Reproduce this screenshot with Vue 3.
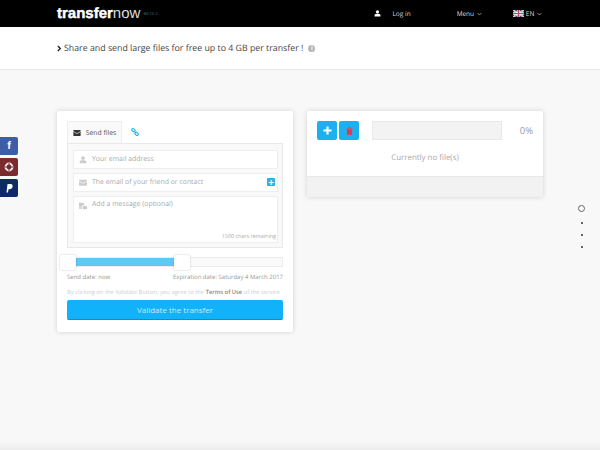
<script setup>
const dots = [0, 1, 2]
</script>

<template>
  <div class="page">
    <header class="topbar">
      <div class="brand"><b>transfer</b><span>now</span><i>BETA 2</i></div>
      <nav class="nav">
        <svg class="user" viewBox="0 0 12 12"><circle cx="6" cy="3.2" r="2.7" fill="#fff" /><path d="M1 11V8.6C1 7.4 2.4 6.6 4 6.4h4c1.6.2 3 1 3 2.2V11z" fill="#fff" /></svg>
        <span class="login">Log in</span>
        <span class="menu">Menu <svg class="chev" viewBox="0 0 8 5"><path d="M1 1l3 3 3-3" /></svg></span>
        <svg class="flag" viewBox="0 0 12 8">
          <rect width="12" height="8" fill="#3f4f8f" />
          <path d="M0 0l12 8M12 0L0 8" stroke="#fff" stroke-width="1.6" />
          <path d="M0 0l12 8M12 0L0 8" stroke="#c8506f" stroke-width=".6" />
          <path d="M6 0v8M0 4h12" stroke="#fff" stroke-width="2.6" />
          <path d="M6 0v8M0 4h12" stroke="#c8405f" stroke-width="1.4" />
        </svg>
        <span class="lang">EN <svg class="chev" viewBox="0 0 8 5"><path d="M1 1l3 3 3-3" /></svg></span>
      </nav>
    </header>

    <section class="tagline">
      <svg class="arrow" viewBox="0 0 6 8"><path d="M1 1l3 3-3 3" /></svg>
      <span>Share and send large files for free up to 4 GB per transfer !</span>
      <span class="info">i</span>
    </section>

    <main class="content">
      <div class="card send">
        <div class="tabs">
          <div class="tab active">
            <svg class="tab-mail" viewBox="0 0 12 10"><rect width="12" height="10" rx="1" fill="#333" /><path d="M0 2.5l6 3.5 6-3.5" fill="none" stroke="#fff" stroke-width="1" /></svg>
            Send files
          </div>
          <div class="tab link">
            <svg viewBox="0 0 10 10"><g fill="none" stroke="#1fb1e6" stroke-width="1.4"><rect x="0.8" y="1.2" width="4.4" height="3" rx="1.4" transform="rotate(40 3 2.7)" /><rect x="4.8" y="5.8" width="4.4" height="3" rx="1.4" transform="rotate(40 7 7.3)" /></g></svg>
          </div>
        </div>
        <div class="fields">
          <div class="field">
            <svg class="ficon" viewBox="0 0 12 12"><circle cx="6" cy="3.2" r="2.7" /><path d="M1 11V8.6C1 7.4 2.4 6.6 4 6.4h4c1.6.2 3 1 3 2.2V11z" /></svg>
            <span>Your email address</span>
          </div>
          <div class="field">
            <svg class="ficon" viewBox="0 0 12 10"><rect width="12" height="9" rx="1" /><path d="M0 2.5l6 3 6-3" fill="none" stroke="#fff" /></svg>
            <span>The email of your friend or contact</span>
            <span class="plus">+</span>
          </div>
          <div class="field message">
            <svg class="ficon" viewBox="0 0 12 12"><path d="M0 1h6l2 2v2H5v2H0zM0 8h5v2H0zM6 6h6v5H6z" /></svg>
            <span>Add a message (optional)</span>
            <small>1500 chars remaining</small>
          </div>
        </div>
        <div class="slider">
          <div class="handle"></div>
          <div class="fill"></div>
          <div class="handle second"></div>
        </div>
        <div class="dates">
          <span>Send date: now</span>
          <span>Expiration date: Saturday 4 March 2017</span>
        </div>
        <p class="terms">By clicking on the Validate Button, you agree to the <b>Terms of Use</b> of the service</p>
        <button class="validate">Validate the transfer</button>
      </div>

      <div class="card files">
        <div class="files-body">
          <div class="toolbar">
            <button class="tool">
              <svg class="add" viewBox="0 0 10 10"><path d="M5 .5v9M.5 5h9" stroke="#fff" stroke-width="2.4" /></svg>
            </button>
            <button class="tool">
              <svg class="trash" viewBox="0 0 8 9"><path d="M1 2.4h6V9H1zM.4 1h7.2v1H.4zM2.8 0h2.4v1H2.8z" fill="#e0445c" /><path d="M2.6 3.4v4.4M5.4 3.4v4.4" stroke="#a32f48" stroke-width=".6" /></svg>
            </button>
            <div class="progress"></div>
            <span class="percent">0%</span>
          </div>
          <p class="empty">Currently no file(s)</p>
        </div>
        <div class="files-foot"></div>
      </div>
    </main>

    <div class="social">
      <a class="fb">f</a>
      <a class="lifebuoy"><svg viewBox="0 0 10 10"><circle cx="5" cy="5" r="3.4" fill="none" stroke="#eee" stroke-width="2" /><path d="M5 1v8M1 5h8" stroke="#7b2a2e" stroke-width="1" /></svg></a>
      <a class="paypal"><svg viewBox="0 0 10 10"><path d="M2.5 9.5L3.5 1h3C8.5 1 9 2.5 8.5 4S6.8 6.2 5.5 6.2h-1L4 9.5z" fill="#fff" /></svg></a>
    </div>

    <div class="pager">
      <span class="ring"></span>
      <span v-for="d in dots" :key="d" class="dot"></span>
    </div>
  </div>
</template>

<style>
html, body {
  margin: 0;
  height: 100%;
  overflow: hidden;
}
</style>

<style scoped>
.page {
  position: relative;
  width: 600px;
  height: 450px;
  overflow: hidden;
  background: linear-gradient(to bottom, #f8f8f8 440px, #ededed 450px);
  font-family: "Open Sans", "Liberation Sans", sans-serif;
  text-rendering: geometricPrecision;
  color: #999;
}

.topbar {
  height: 27px;
  background: #000;
  display: flex;
  align-items: center;
  justify-content: space-between;
  padding-left: 57px;
  padding-right: 58px;
  color: #ddd;
}

.brand {
  font-family: "Liberation Sans", Arial, sans-serif;
  font-size: 15px;
  color: #fff;
  display: flex;
  align-items: baseline;
}

.brand b {
  font-weight: 700;
  -webkit-text-stroke: 0.4px #fff;
}

.brand span {
  font-weight: 400;
  color: #ddd;
}

.brand i {
  font-style: normal;
  font-size: 4px;
  color: #3d6a78;
  margin-left: 3px;
  align-self: center;
  letter-spacing: 0.2px;
}

.nav {
  display: flex;
  align-items: center;
  font-size: 6.5px;
}

.user {
  width: 7px;
  height: 7px;
  margin-right: 11px;
}

.login {
  margin-right: 46px;
}

.menu {
  margin-right: 31px;
}

.chev {
  width: 5px;
  height: 4px;
  fill: none;
  stroke: #ddd;
  stroke-width: 1;
  margin-left: 1px;
}

.flag {
  width: 11px;
  height: 7px;
  margin-right: 2px;
}

.tagline {
  height: 42px;
  background: #fff;
  border-bottom: 1px solid #ebebeb;
  display: flex;
  align-items: center;
  padding-left: 57px;
  font-size: 8.8px;
  color: #444;
}

.arrow {
  width: 5px;
  height: 7px;
  margin-right: 2px;
  fill: none;
  stroke: #222;
  stroke-width: 1.6;
}

.info {
  width: 7px;
  height: 7px;
  margin-left: 5px;
  border-radius: 50%;
  background: #b5b5b5;
  color: #fff;
  font-size: 6px;
  font-weight: 700;
  line-height: 7px;
  text-align: center;
}

.content {
  display: flex;
  align-items: flex-start;
  gap: 14px;
  padding: 41px 0 0 57px;
}

.card {
  width: 236px;
  background: #fff;
  border-radius: 2px;
  box-shadow: 0 0 5px rgba(0, 0, 0, 0.16);
}

.send {
  box-sizing: border-box;
  height: 221px;
  padding: 10px 10px 0;
}

.tabs {
  display: flex;
  height: 22px;
}

.tab {
  display: flex;
  align-items: center;
  justify-content: center;
  box-sizing: border-box;
  font-size: 6.8px;
  color: #555;
}

.tab.active {
  width: 55px;
  background: #fafafa;
  border: 1px solid #eee;
  border-bottom: none;
  gap: 5px;
}

.tab-mail {
  width: 8px;
  height: 6px;
}

.tab.link {
  width: 25px;
}

.tab.link svg {
  width: 8px;
  height: 8px;
}

.fields {
  box-sizing: border-box;
  height: 105px;
  padding: 6px 4px 5px 5px;
  background: #f9f9f9;
  border: 1px solid #e9e9e9;
  display: flex;
  flex-direction: column;
  gap: 4px;
}

.field {
  position: relative;
  box-sizing: border-box;
  height: 19px;
  flex: none;
  background: #fff;
  border: 1px solid #eee;
  display: flex;
  align-items: center;
  padding-left: 5px;
  font-size: 6.9px;
  color: #aaa;
}

.ficon {
  width: 8px;
  height: 8px;
  margin-right: 5px;
  fill: #ccc;
}

.plus {
  position: absolute;
  right: 2px;
  top: 4px;
  width: 8px;
  height: 8px;
  border-radius: 1px;
  background: #2bb3e6;
  color: #fff;
  font-size: 10px;
  font-weight: 700;
  line-height: 8px;
  text-align: center;
}

.message {
  height: 47px;
  align-items: flex-start;
  padding-top: 3px;
}

.message .ficon {
  margin-top: 2px;
}

.message small {
  position: absolute;
  right: 1px;
  bottom: 2px;
  font-size: 5.4px;
  color: #aaa;
}

.slider {
  display: flex;
  align-items: center;
  box-sizing: border-box;
  height: 10px;
  margin-top: 9px;
  background: #fafafa;
  border: 1px solid #ececec;
  border-radius: 1px;
  position: relative;
}

.handle {
  width: 16px;
  height: 15px;
  flex: none;
  margin-left: -8px;
  background: #fff;
  border-radius: 2px;
  box-shadow: 0 0 2px rgba(0, 0, 0, 0.25);
  position: relative;
}

.handle.second {
  margin-left: 0;
}

.fill {
  width: 98px;
  height: 8px;
  background: #5fc8f8;
}

.dates {
  display: flex;
  justify-content: space-between;
  margin-top: 6px;
  font-size: 6px;
  color: #999;
}

.terms {
  margin: 7px 0 0;
  font-size: 5.8px;
  color: #c9cfd3;
  white-space: nowrap;
}

.terms b {
  font-weight: 600;
  color: #888;
}

.validate {
  display: block;
  width: 100%;
  height: 20px;
  margin-top: 4px;
  padding: 0;
  border: none;
  border-bottom: 1px solid #0e8fc6;
  border-radius: 2px;
  background: #12b2fa;
  color: #c6ecfd;
  font-family: inherit;
  font-size: 8px;
}

.files-body {
  height: 65px;
  box-sizing: border-box;
  padding: 10px 10px 0;
}

.toolbar {
  display: flex;
  align-items: center;
}

.tool {
  width: 20px;
  height: 19px;
  margin-right: 2px;
  padding: 0;
  border: none;
  border-radius: 2px;
  background: #1cb0ee;
  display: flex;
  align-items: center;
  justify-content: center;
}

.add {
  width: 9px;
  height: 9px;
}

.trash {
  width: 7px;
  height: 8px;
}

.progress {
  width: 130px;
  height: 19px;
  margin-left: 11px;
  background: #f3f3f3;
  border: 1px solid #e9e9e9;
  box-sizing: border-box;
}

.percent {
  margin-left: auto;
  font-size: 9.5px;
  color: #999;
}

.empty {
  margin: 13px 0 0;
  text-align: center;
  font-size: 7.9px;
  color: #aaa;
}

.files-foot {
  height: 20px;
  background: #f2f2f2;
  border-top: 1px solid #e8e8e8;
}

.social {
  position: absolute;
  left: 0;
  top: 137px;
  display: flex;
  flex-direction: column;
  gap: 3px;
}

.social a {
  width: 18px;
  height: 18px;
  border-radius: 0 2px 2px 0;
  display: flex;
  align-items: center;
  justify-content: center;
  color: #fff;
  font-family: "Liberation Sans", sans-serif;
  font-weight: 700;
  font-size: 11px;
}

.social svg {
  width: 10px;
  height: 10px;
}

.fb {
  background: #3f5da6;
}

.lifebuoy {
  background: #7b2a2e;
}

.paypal {
  background: #0c2a66;
}

.pager {
  position: absolute;
  left: 578px;
  top: 205px;
  width: 7px;
  display: flex;
  flex-direction: column;
  align-items: center;
}

.ring {
  box-sizing: border-box;
  width: 7px;
  height: 7px;
  border: 1px solid #666;
  border-radius: 50%;
}

.dot {
  width: 2px;
  height: 2px;
  margin-top: 10px;
  border-radius: 50%;
  background: #333;
}
</style>
